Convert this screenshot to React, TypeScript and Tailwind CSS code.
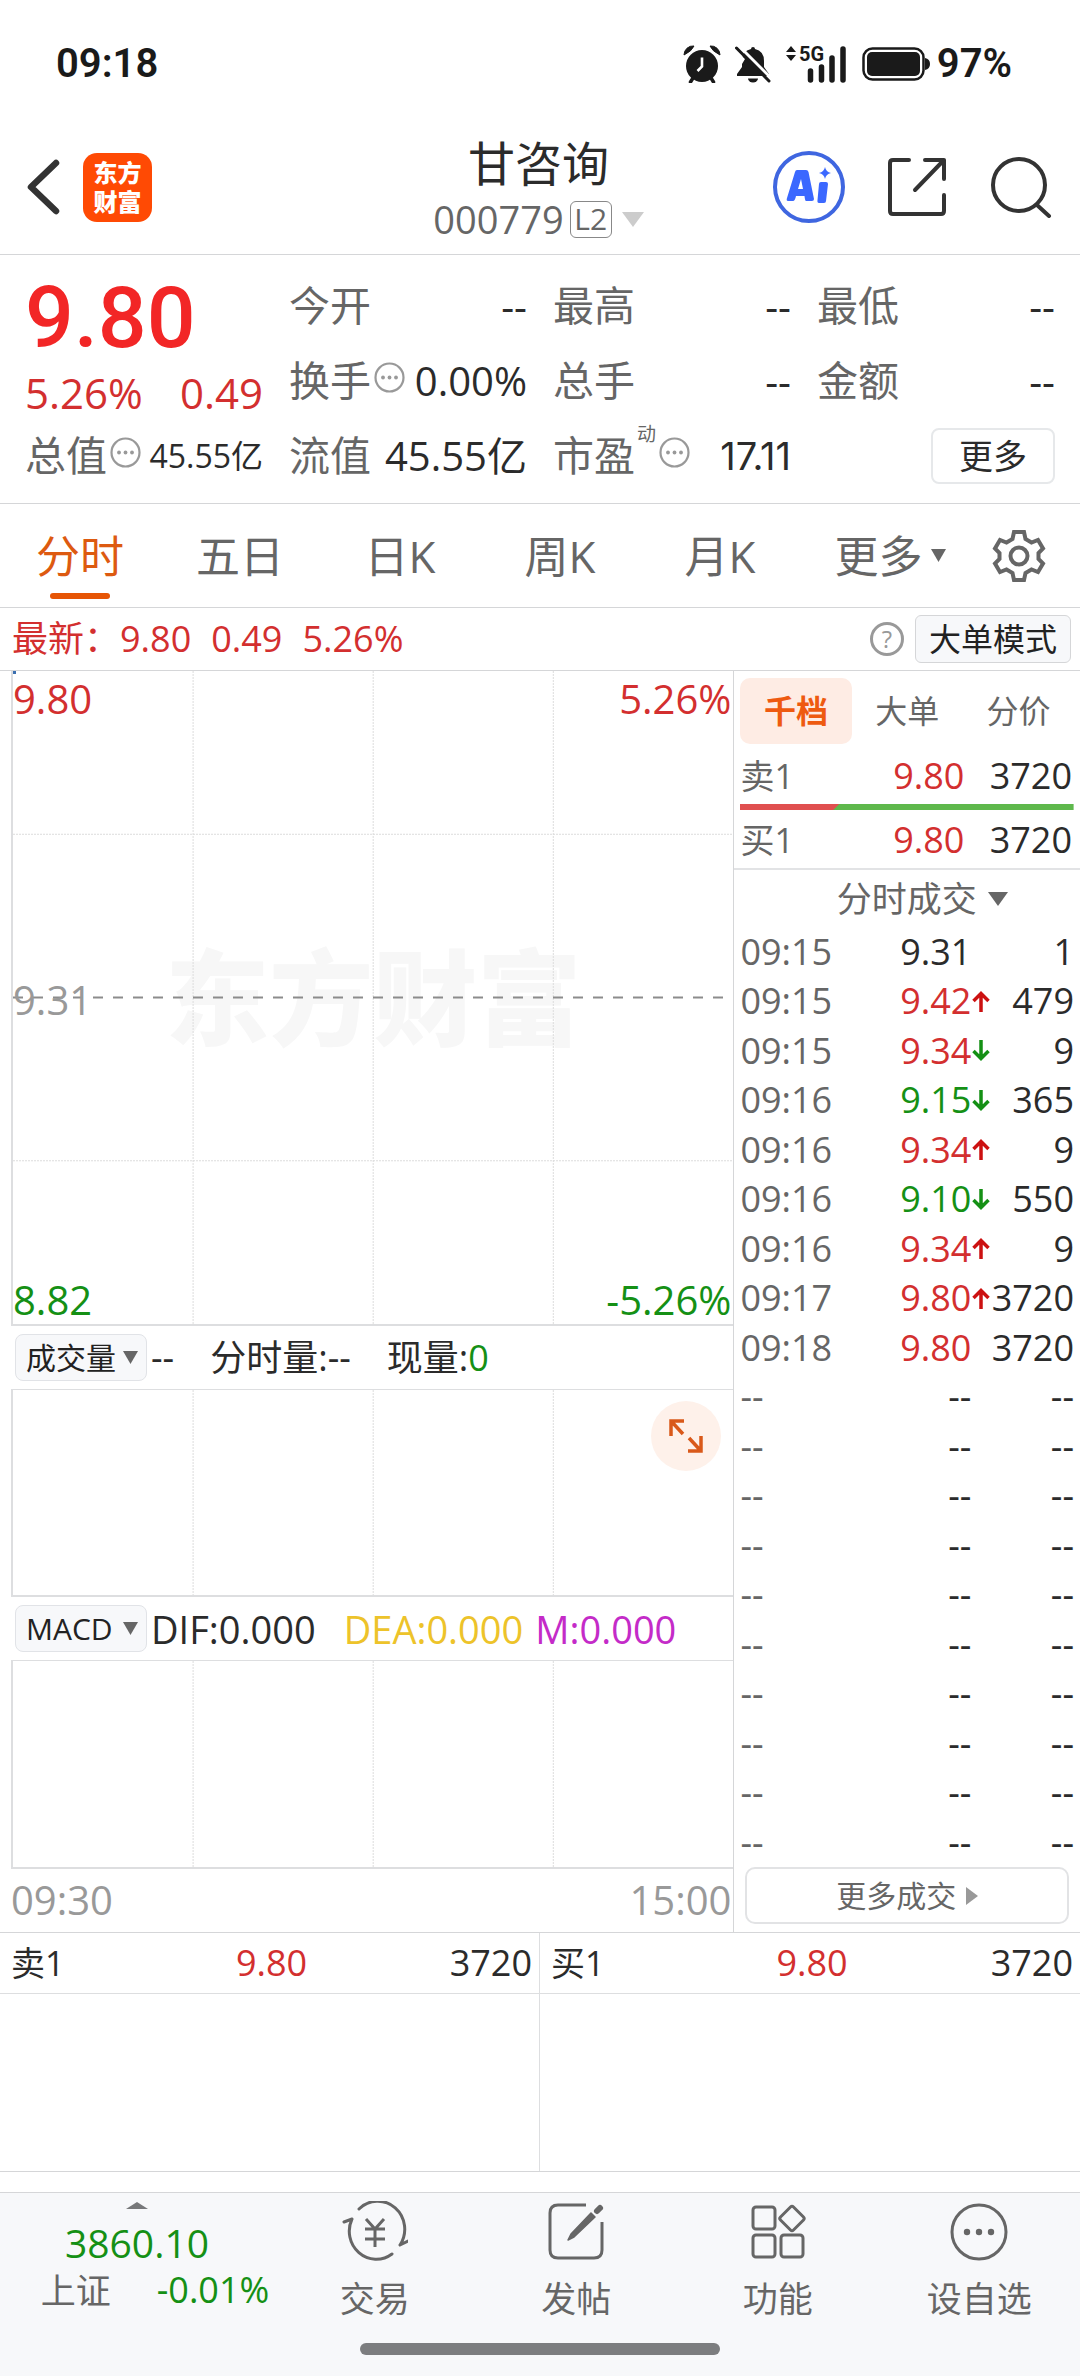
import React from "react";

type Dir = "up" | "down" | "";

interface Trade {
  time: string;
  price: string;
  dir: Dir;
  volume: string;
  tone: string;
}

const RED = "text-[#d32f2f]";
const GREEN = "text-[#159015]";
const INK = "text-[#2b2b2b]";

const trades: Trade[] = [
  { time: "09:15", price: "9.31", dir: "", volume: "1", tone: INK },
  { time: "09:15", price: "9.42", dir: "up", volume: "479", tone: RED },
  { time: "09:15", price: "9.34", dir: "down", volume: "9", tone: RED },
  { time: "09:16", price: "9.15", dir: "down", volume: "365", tone: GREEN },
  { time: "09:16", price: "9.34", dir: "up", volume: "9", tone: RED },
  { time: "09:16", price: "9.10", dir: "down", volume: "550", tone: GREEN },
  { time: "09:16", price: "9.34", dir: "up", volume: "9", tone: RED },
  { time: "09:17", price: "9.80", dir: "up", volume: "3720", tone: RED },
  { time: "09:18", price: "9.80", dir: "", volume: "3720", tone: RED },
  ...Array.from({ length: 10 }, (): Trade => ({ time: "--", price: "--", dir: "", volume: "--", tone: INK })),
];

function StatusBar() {
  return (
    <div className="flex h-[128px] items-center justify-between pl-[56px] pr-[68px] font-['Roboto',sans-serif] text-[#1a1a1a]">
      <span className="text-[40px] font-semibold leading-none">09:18</span>
      <div className="flex items-center">
        <svg className="h-[38px] w-[38px]" viewBox="0 0 38 38" aria-label="闹钟">
          <circle cx="19" cy="21" r="16" fill="currentColor" />
          <path d="M1 10 A9 9 0 0 1 11 1 Q9 6 1 10Z M37 10 A9 9 0 0 0 27 1 Q29 6 37 10Z" fill="currentColor" stroke="currentColor" strokeWidth="1" strokeLinejoin="round" />
          <path d="M10 33 L7.500 37 M28 33 L30.500 37" stroke="currentColor" strokeWidth="3.500" strokeLinecap="round" />
          <path d="M19 12.500 V21.500 L14.500 26" fill="none" stroke="white" strokeWidth="2.600" />
        </svg>
        <svg className="ml-[14px] h-[38px] w-[36px]" viewBox="0 0 36 38" aria-label="静音">
          <path d="M18 2 a2 2 0 0 1 2 2 q9 2 9 12 v6 l5 7 v2 H2 v-2 l5 -7 v-6 q0 -10 9 -12 a2 2 0 0 1 2-2Z" fill="currentColor" />
          <path d="M13 33.500 h10 a5 4 0 0 1 -10 0Z" fill="currentColor" />
          <path d="M3 0 L38 35" stroke="white" strokeWidth="3" />
          <path d="M0 -1 L4 -1 L-1 6Z M0 4 L10 14 L4 24 H0Z" fill="white" />
          <path d="M1.500 3 L34 36" stroke="currentColor" strokeWidth="3" strokeLinecap="round" />
        </svg>
        <svg className="ml-[14px] h-[50px] w-[64px]" viewBox="0 -6 64 50" aria-label="5G 信号">
          <path d="M1 7 L6 1 L11 7Z M1 10 L6 16 L11 10Z" fill="currentColor" />
          <text x="14" y="16" fontSize="20" fontWeight="700" fill="currentColor">5G</text>
          <path d="M25.500 26 V35 M36.500 22 V35 M47 13 V35 M58 4 V35" stroke="currentColor" strokeWidth="5.500" strokeLinecap="round" />
        </svg>
        <svg className="ml-[13px] h-[36px] w-[68px]" viewBox="0 0 68 36" aria-label="电量">
          <rect x="1.500" y="2.500" width="60" height="31" rx="9" fill="none" stroke="currentColor" strokeWidth="2.500" />
          <rect x="5" y="6" width="53" height="24" rx="5" fill="currentColor" />
          <path d="M63 12 q5 1 5 6 q0 5 -5 6Z" fill="currentColor" />
        </svg>
        <span className="ml-[7px] text-[40px] font-semibold leading-none">97%</span>
      </div>
    </div>
  );
}

function Header() {
  return (
    <header className="grid h-[127px] grid-cols-[1fr_auto_1fr] items-center border-b border-[#d5d6d8] pl-[25px] pr-[28px]">
      <div className="flex items-center gap-[22px] pb-[8px]">
        <button type="button" aria-label="返回" className="text-[#333]">
          <svg className="h-[60px] w-[36px]" viewBox="0 0 36 60" fill="none">
            <path d="M31 6 L6 30 L31 54" stroke="currentColor" strokeWidth="6.500" strokeLinecap="round" strokeLinejoin="round" />
          </svg>
        </button>
        <a href="#home" aria-label="东方财富" className="grid h-[69px] w-[69px] place-content-center rounded-[14px] bg-[#ff4a04] text-[24px] font-black leading-[29px] text-white">
          <span>东方</span>
          <span>财富</span>
        </a>
      </div>
      <div className="flex flex-col items-center pb-[4px]">
        <h1 className="text-[47px] leading-[60px] text-[#2b2b2b]">甘咨询</h1>
        <button type="button" className="flex items-center text-[38px] leading-[52px] text-[#666]">
          000779
          <span className="ml-[6px] grid h-[37px] w-[42px] place-content-center rounded-[6px] border border-[#888] text-[30px] leading-none">L2</span>
          <svg className="ml-[10px] h-[15px] w-[22px]" viewBox="0 0 22 15">
            <path d="M0 0 H22 L11 15Z" fill="#ccc" />
          </svg>
        </button>
      </div>
      <div className="flex items-center justify-end pb-[8px]">
        <button type="button" aria-label="AI">
          <svg className="h-[74px] w-[74px]" viewBox="0 0 74 74">
            <circle cx="37" cy="37" r="34" fill="none" stroke="#3f66e0" strokeWidth="4" />
            <path fillRule="evenodd" d="M25 20 H34 Q36 20 36.500 22 L42 49 Q42 51 40 51 H34 Q33 51 32.500 46 H24 Q23 51 21 51 H16 Q14 51 15 48 L23 22 Q23.500 20 25 20Z M29 29 L26 39 H31Z" fill="#3b68ff" />
            <path d="M49 32 H54 Q56 32 56 34 L54 51 Q54 53 52 53 H47 Q45 53 45.500 50 L47 34 Q47 32 49 32Z M53 17 Q54 22 59 23 Q54 24 53 29 Q52 24 47 23 Q52 22 53 17Z" fill="#3b68ff" />
          </svg>
        </button>
        <button type="button" aria-label="分享" className="ml-[41px] text-[#333]">
          <svg className="h-[60px] w-[60px]" viewBox="0 0 60 60" fill="none" stroke="currentColor" strokeWidth="4" strokeLinecap="round" strokeLinejoin="round">
            <path d="M22 3 H6 Q3 3 3 6 V54 Q3 57 6 57 H54 Q57 57 57 54 V38" />
            <path d="M38 3 H57 V22 M57 3 L28 33" />
          </svg>
        </button>
        <button type="button" aria-label="搜索" className="ml-[43px] text-[#333]">
          <svg className="h-[62px] w-[62px]" viewBox="0 0 62 62" fill="none" stroke="currentColor" strokeWidth="4" strokeLinecap="round">
            <circle cx="29" cy="29" r="26" />
            <path d="M47 49 L59 60" />
          </svg>
        </button>
      </div>
    </header>
  );
}

function MoreDot() {
  return (
    <svg className="mb-[6px] ml-[3px] h-[31px] w-[31px] shrink-0" viewBox="0 0 31 31" aria-hidden="true">
      <circle cx="15.500" cy="15.500" r="14" fill="none" stroke="#999" strokeWidth="2.200" />
      <circle cx="9" cy="15.500" r="1.900" fill="#999" />
      <circle cx="15.500" cy="15.500" r="1.900" fill="#999" />
      <circle cx="22" cy="15.500" r="1.900" fill="#999" />
    </svg>
  );
}

function Stat({ label, value, info, sup, size = "text-[40px]" }: { label: string; value: string; info?: boolean; sup?: string; size?: string }) {
  return (
    <div className="flex h-[75px] items-center whitespace-nowrap">
      <dt className="flex items-center text-[41px] leading-none text-[#666]">
        {label}
        {sup && <span className="mb-[42px] ml-[2px] text-[19px]">{sup}</span>}
        {info && <MoreDot />}
      </dt>
      <dd className={`ml-auto leading-none text-[#2b2b2b] ${size}`}>{value}</dd>
    </div>
  );
}

function Quote() {
  return (
    <section className="grid grid-cols-4 gap-x-[26px] border-b border-[#d5d6d8] px-[25px] pb-[10px] pt-[13px]">
      <div className="flex flex-col">
        <div className="flex h-[100px] items-center font-['Roboto',sans-serif] text-[86px] font-medium leading-none text-[#f22626]">9.80</div>
        <div className="flex h-[50px] items-center justify-between text-[42px] leading-none text-[#d32f2f]">
          <span>5.26%</span>
          <span>0.49</span>
        </div>
        <dl>
          <Stat label="总值" value="45.55亿" info size="text-[32px]" />
        </dl>
      </div>
      <dl>
        <Stat label="今开" value="--" />
        <Stat label="换手" value="0.00%" info />
        <Stat label="流值" value="45.55亿" />
      </dl>
      <dl>
        <Stat label="最高" value="--" />
        <Stat label="总手" value="--" />
        <Stat label="市盈" value="17.11" info sup="动" size="font-['Inter',sans-serif] text-[38px]" />
      </dl>
      <div>
        <dl>
          <Stat label="最低" value="--" />
          <Stat label="金额" value="--" />
        </dl>
        <div className="flex h-[75px] items-center justify-end">
          <button type="button" className="h-[56px] w-[124px] rounded-[8px] border-2 border-[#e6e8ea] text-[34px] leading-none text-[#2b2b2b]">更多</button>
        </div>
      </div>
    </section>
  );
}

function PeriodTabs() {
  const tabs = ["分时", "五日", "日K", "周K", "月K"];
  return (
    <nav className="flex h-[104px] items-stretch border-b border-[#d5d6d8] text-[44px] leading-none text-[#666]">
      {tabs.map((t, i) => (
        <button
          key={t}
          type="button"
          aria-current={i === 0 ? "page" : undefined}
          className={i === 0 ? "relative flex-[160] text-[#dd5a10]" : "flex-[160]"}
        >
          {t}
          {i === 0 && <span className="absolute bottom-[8px] left-1/2 h-[6px] w-[60px] -translate-x-1/2 rounded-full bg-[#e65505]" />}
        </button>
      ))}
      <button type="button" className="flex flex-[180] items-center justify-center gap-[8px]">
        更多
        <svg className="h-[13px] w-[15px]" viewBox="0 0 15 13">
          <path d="M0 0 H15 L7.500 13Z" fill="currentColor" />
        </svg>
      </button>
      <button type="button" aria-label="设置" className="flex flex-[100] items-center">
        <svg className="ml-[12px] h-[54px] w-[54px]" viewBox="0 0 54 54" fill="none" stroke="currentColor" strokeWidth="4" strokeLinejoin="miter">
          <path d="M22 3 H32 L33.500 10 L39.500 13.500 L46 11 L51 19.500 L46.500 24 V30 L51 34.500 L46 43 L39.500 40.500 L33.500 44 L32 51 H22 L20.500 44 L14.500 40.500 L8 43 L3 34.500 L7.500 30 V24 L3 19.500 L8 11 L14.500 13.500 L20.500 10Z" />
          <circle cx="27" cy="27" r="8.500" />
        </svg>
      </button>
    </nav>
  );
}

function LatestBar() {
  return (
    <div className="flex h-[63px] items-center border-b border-[#d5d6d8] pl-[12px] pr-[9px] text-[36px] leading-none text-[#d32f2f]">
      <span className="w-[108px] whitespace-nowrap">最新：</span>
      <span>9.80</span>
      <span className="ml-[20px]">0.49</span>
      <span className="ml-[20px]">5.26%</span>
      <button type="button" aria-label="说明" className="ml-auto grid h-[34px] w-[34px] place-content-center rounded-full border-[3px] border-[#999] text-[24px] leading-none text-[#999]">?</button>
      <button type="button" className="ml-[11px] h-[48px] w-[156px] whitespace-nowrap rounded-[6px] border border-[#d5d6d8] bg-[#f7f8fa] text-[32px] leading-none text-[#222]">大单模式</button>
    </div>
  );
}

function Grid({ horizontal }: { horizontal?: boolean }) {
  return (
    <svg className="absolute inset-0 h-full w-full" aria-hidden="true">
      {["25%", "50%", "75%"].map((x) => (
        <line key={x} x1={x} x2={x} y1="0" y2="100%" stroke="#dcdcdc" strokeWidth="1" strokeDasharray="2 1" />
      ))}
      {horizontal &&
        ["25%", "75%"].map((y) => <line key={y} x1="0" x2="100%" y1={y} y2={y} stroke="#dcdcdc" strokeWidth="1" strokeDasharray="2 1" />)}
      {horizontal && <line x1="0" x2="100%" y1="50%" y2="50%" stroke="#8c8c8c" strokeWidth="2" strokeDasharray="10 10" />}
      {horizontal && <rect x="0" y="0" width="3" height="3" fill="#3b6fb0" />}
    </svg>
  );
}

function PickButton({ children }: { children: string }) {
  return (
    <button type="button" className="mr-[4px] flex h-[47px] w-[132px] shrink-0 items-center justify-between whitespace-nowrap rounded-[8px] border border-[#e1e3e7] bg-[#f7f8fa] pl-[10px] pr-[8px] text-[30px] leading-none text-[#222]">
      {children}
      <svg className="h-[13px] w-[15px]" viewBox="0 0 15 13">
        <path d="M0 0 H15 L7.500 13Z" fill="#666" />
      </svg>
    </button>
  );
}

function Charts() {
  return (
    <section className="flex w-[68%] flex-col border-r border-[#d5d6d8] pl-[11px]">
      <div className="relative h-[655px] border-b-2 border-l-2 border-[#dddee0]">
        <div className="absolute inset-0 flex items-center justify-center text-[104px] font-black leading-none text-[#f7f7f7]">东方财富</div>
        <Grid horizontal />
        <div className="absolute inset-0 flex flex-col justify-between pr-[2px] pt-[4px] text-[40px] leading-[48px]">
          <div className="flex justify-between text-[#d32f2f]">
            <span>9.80</span>
            <span>5.26%</span>
          </div>
          <div className="text-[#999]">9.31</div>
          <div className="flex justify-between text-[#159015]">
            <span>8.82</span>
            <span>-5.26%</span>
          </div>
        </div>
      </div>
      <div className="flex h-[63px] items-center whitespace-pre pl-[4px] text-[36px] leading-none text-[#2b2b2b]">
        <PickButton>成交量</PickButton>
        <span>--</span>
        <span className="ml-[36px]">分时量:--</span>
        <span className="ml-[36px]">现量:</span>
        <span className="text-[#159015]">0</span>
      </div>
      <div className="relative h-[208px] border-b-2 border-l-2 border-t border-[#dddee0]">
        <Grid />
        <button type="button" aria-label="全屏" className="absolute right-[12px] top-[11px] grid h-[70px] w-[70px] place-content-center rounded-full bg-[#fef1ea]">
          <svg className="h-[36px] w-[36px]" viewBox="0 0 36 36" fill="none" stroke="#d9591a" strokeWidth="3.500">
            <path d="M16 3 H3 V18 M3 3 L15 16" />
            <path d="M20 33 H33 V18 M33 33 L21 20" />
          </svg>
        </button>
      </div>
      <div className="flex h-[63px] items-center whitespace-pre pl-[4px] text-[38px] leading-none">
        <PickButton>MACD</PickButton>
        <span className="text-[#2b2b2b]">DIF:0.000</span>
        <span className="ml-[28px] text-[#edc32a]">DEA:0.000</span>
        <span className="ml-[12px] text-[#c42bc8]">M:0.000</span>
      </div>
      <div className="relative h-[209px] border-b-2 border-l-2 border-t border-[#dddee0]">
        <Grid />
      </div>
      <div className="flex h-[62px] items-center justify-between pr-[2px] text-[40px] leading-none text-[#999]">
        <span>09:30</span>
        <span>15:00</span>
      </div>
    </section>
  );
}

function Arrow({ dir }: { dir: Dir }) {
  if (dir === "") return null;
  return (
    <svg
      className={dir === "up" ? "mx-auto h-[21px] w-[18px] text-[#cc1111]" : "mx-auto h-[21px] w-[18px] rotate-180 text-[#159015]"}
      viewBox="0 0 18 21"
      fill="none"
      stroke="currentColor"
      strokeWidth="3.500"
      aria-label={dir === "up" ? "上涨" : "下跌"}
    >
      <path d="M9 21 V3 M1.500 10 L9 2.500 L16.500 10" />
    </svg>
  );
}

function Level({ name }: { name: string }) {
  return (
    <div className="flex h-[56px] items-center text-[36px] leading-none">
      <span className="w-[112px] text-[34px] text-[#666]">{name}</span>
      <span className="w-[112px] text-right text-[#d32f2f]">9.80</span>
      <span className="ml-auto text-[#2b2b2b]">3720</span>
    </div>
  );
}

function Depth() {
  return (
    <section className="flex min-w-0 flex-1 flex-col">
      <div className="flex h-[77px] items-center px-[6px] pt-[2px] text-[32px] leading-none text-[#666]">
        <button type="button" aria-pressed="true" className="h-[66px] flex-1 rounded-[10px] bg-[#feece4] font-bold text-[#ee5a10]">千档</button>
        <button type="button" aria-pressed="false" className="h-[66px] flex-1">大单</button>
        <button type="button" aria-pressed="false" className="h-[66px] flex-1">分价</button>
      </div>
      <div className="border-b-2 border-[#e2e3e5] px-[6px]">
        <div className="pr-[2px]">
          <Level name="卖1" />
        </div>
        <svg className="block h-[6px] w-full" viewBox="0 0 333 6" preserveAspectRatio="none" aria-hidden="true">
          <rect width="333" height="6" fill="#5eb84c" />
          <path d="M0 0 H99 L93 6 H0Z" fill="#e04f4f" />
        </svg>
        <div className="pr-[2px] pt-[2px]">
          <Level name="买1" />
        </div>
      </div>
      <button type="button" className="flex h-[57px] items-center justify-center gap-[11px] pl-[30px] text-[35px] leading-none text-[#666]">
        分时成交
        <svg className="h-[14px] w-[20px]" viewBox="0 0 20 14">
          <path d="M0 0 H20 L10 14Z" fill="currentColor" />
        </svg>
      </button>
      <table className="w-full table-fixed border-collapse text-[36px] leading-none">
        <colgroup>
          <col className="w-[110px]" />
          <col className="w-[127px]" />
          <col className="w-[20px]" />
          <col />
        </colgroup>
        <tbody>
          {trades.map((t, i) => (
            <tr key={i} className="h-[49px] even:h-[50px]">
              <td className="whitespace-nowrap p-0 pl-[6px] text-[#666]">{t.time}</td>
              <td className={`p-0 text-right ${t.tone}`}>{t.price}</td>
              <td className="p-0">
                <Arrow dir={t.dir} />
              </td>
              <td className="p-0 pr-[6px] text-right text-[#2b2b2b]">{t.volume}</td>
            </tr>
          ))}
        </tbody>
      </table>
      <button type="button" className="mx-[11px] mb-[8px] mt-auto flex h-[57px] items-center justify-center gap-[10px] rounded-[10px] border-2 border-[#e2e3e5] text-[30px] leading-none text-[#666]">
        更多成交
        <svg className="h-[18px] w-[12px]" viewBox="0 0 12 18">
          <path d="M0 0 L12 9 L0 18Z" fill="#999" />
        </svg>
      </button>
    </section>
  );
}

function BookHalf({ name, first }: { name: string; first?: boolean }) {
  return (
    <div className={first ? "border-r border-[#dddee0]" : ""}>
      <div className="grid h-[61px] grid-cols-3 items-center border-b border-[#dddee0] pl-[11px] pr-[7px] text-[36px] leading-none">
        <span className="text-[34px] text-[#2b2b2b]">{name}</span>
        <span className="text-center text-[#d32f2f]">9.80</span>
        <span className="text-right text-[#2b2b2b]">3720</span>
      </div>
      <div className="h-[177px]" />
    </div>
  );
}

function NavItem({ label, children }: { label: string; children: React.ReactNode }) {
  return (
    <button type="button" className="flex flex-1 flex-col items-center gap-[17px] pt-[8px] text-[35px] leading-[38px] text-[#666]">
      <svg className="h-[62px] w-[66px]" viewBox="0 0 66 62" fill="none" stroke="currentColor" strokeWidth="3" strokeLinecap="round" strokeLinejoin="round" aria-hidden="true">
        {children}
      </svg>
      {label}
    </button>
  );
}

function BottomNav() {
  return (
    <footer className="flex flex-1 flex-col border-t border-[#d5d6d8] bg-[#f7f8fa]">
      <nav className="flex h-[150px]">
        <button type="button" className="flex flex-[274] flex-col items-center pt-[9px] leading-none">
          <svg className="h-[7px] w-[22px]" viewBox="0 0 22 7">
            <path d="M0 7 L11 0 L22 7Z" fill="#77787a" />
          </svg>
          <span className="mt-[14px] text-[39px] text-[#159015]">3860.10</span>
          <span className="mt-[10px] flex items-center whitespace-nowrap pl-[36px] text-[35px] text-[#666]">
            上证
            <span className="ml-[46px] text-[36px] text-[#159015]">-0.01%</span>
          </span>
        </button>
        <div className="flex flex-[806]">
          <NavItem label="交易">
            <path d="M17 8 A27 28 0 0 1 58 44 M58 44 L66 40 M50 53 A27 28 0 0 1 10 18 M10 18 L2 21" />
            <path d="M24 18 L33 28 L42 18 M23 28 H43 M23 38 H43 M33 28 V46" strokeLinecap="butt" />
          </NavItem>
          <NavItem label="发帖">
            <path d="M43 4 H15 Q7 4 7 12 V49 Q7 57 15 57 H51 Q59 57 59 49 V21" strokeLinecap="butt" />
            <path d="M57 7 L54 10" strokeWidth="6" />
            <path d="M48 12 L52 16 L31 36 L25 39 L28 33Z" fill="currentColor" strokeWidth="1.500" />
          </NavItem>
          <NavItem label="功能">
            <rect x="8" y="6" width="22" height="22" rx="3" />
            <rect x="8" y="34" width="22" height="22" rx="3" />
            <rect x="36" y="34" width="22" height="22" rx="3" />
            <path d="M45.500 6 Q47 4.500 48.500 6 L58.500 16 Q60 17.500 58.500 19 L48.500 29 Q47 30.500 45.500 29 L35.500 19 Q34 17.500 35.500 16Z" />
          </NavItem>
          <NavItem label="设自选">
            <circle cx="33" cy="31" r="27" />
            <g fill="currentColor" stroke="none">
              <circle cx="21" cy="31" r="3.200" />
              <circle cx="33" cy="31" r="3.200" />
              <circle cx="45" cy="31" r="3.200" />
            </g>
          </NavItem>
        </div>
      </nav>
      <div className="mx-auto h-[12px] w-1/3 rounded-full bg-[#7c7d7f]" />
    </footer>
  );
}

export default function App() {
  return (
    <main className="flex min-h-screen w-full flex-col bg-white font-['Open_Sans','Noto_Sans_CJK_SC',sans-serif]" lang="zh-CN">
      <StatusBar />
      <Header />
      <Quote />
      <PeriodTabs />
      <LatestBar />
      <div className="flex items-stretch">
        <Charts />
        <Depth />
      </div>
      <div className="mb-[20px] grid grid-cols-2 border-b border-t border-[#d5d6d8]">
        <BookHalf name="卖1" first />
        <BookHalf name="买1" />
      </div>
      <BottomNav />
    </main>
  );
}
